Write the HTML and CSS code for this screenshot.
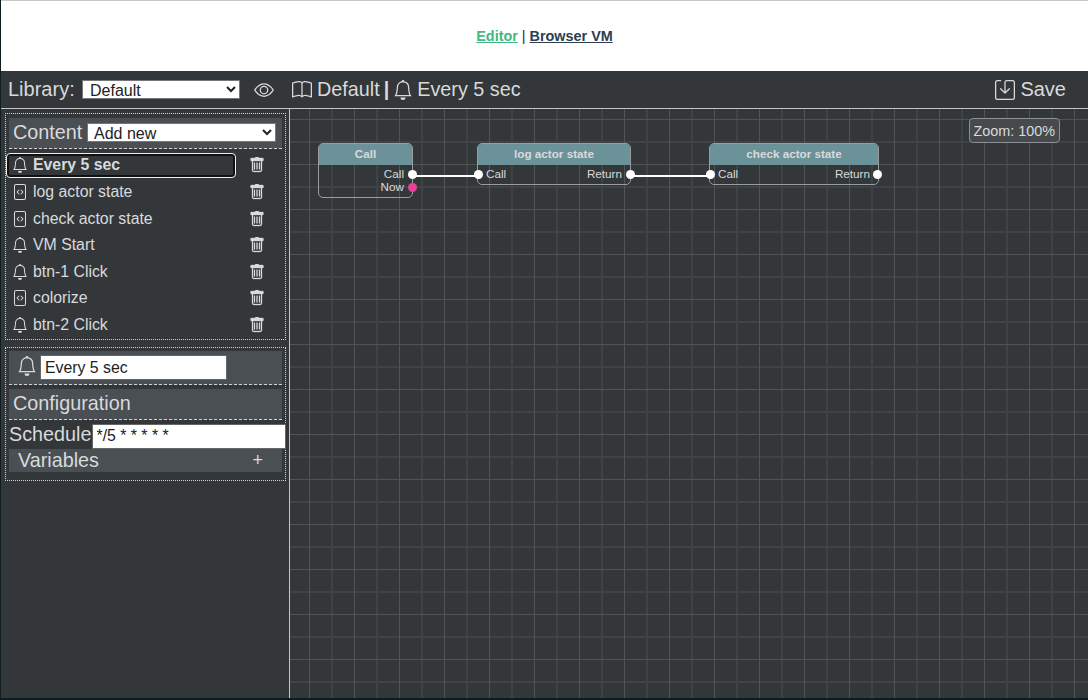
FILE: index.html
```html
<!DOCTYPE html>
<html lang="en">
<head>
<meta charset="utf-8">
<title>Editor</title>
<link rel="stylesheet" href="styles.css">
</head>
<body>
<svg class="defs" width="0" height="0" aria-hidden="true">
  <symbol id="i-bell" viewBox="0 0 16 16"><path d="M8 16a2 2 0 0 0 2-2H6a2 2 0 0 0 2 2zM8 1.918l-.797.161A4.002 4.002 0 0 0 4 6c0 .628-.134 2.197-.459 3.742-.16.767-.376 1.566-.663 2.258h10.244c-.287-.692-.502-1.49-.663-2.258C12.134 8.197 12 6.628 12 6a4.002 4.002 0 0 0-3.203-3.92L8 1.917zM14.22 12c.223.447.481.801.78 1H1c.299-.199.557-.553.78-1C2.68 10.2 3 6.88 3 6c0-2.42 1.72-4.44 4.005-4.901a1 1 0 1 1 1.99 0A5.002 5.002 0 0 1 13 6c0 .88.32 4.2 1.22 6z"/></symbol>
  <symbol id="i-code" viewBox="0 0 16 16"><path d="M6.646 5.646a.5.5 0 1 1 .708.708L5.707 8l1.647 1.646a.5.5 0 0 1-.708.708l-2-2a.5.5 0 0 1 0-.708l2-2zm2.708 0a.5.5 0 1 0-.708.708L10.293 8 8.646 9.646a.5.5 0 0 0 .708.708l2-2a.5.5 0 0 0 0-.708l-2-2z"/><path d="M2 2a2 2 0 0 1 2-2h8a2 2 0 0 1 2 2v12a2 2 0 0 1-2 2H4a2 2 0 0 1-2-2V2zm10-1H4a1 1 0 0 0-1 1v12a1 1 0 0 0 1 1h8a1 1 0 0 0 1-1V2a1 1 0 0 0-1-1z"/></symbol>
  <symbol id="i-trash" viewBox="0 0 16 16"><path d="M2.5 1H6a1 1 0 0 1 1-1h2a1 1 0 0 1 1 1h3.5a1 1 0 0 1 1 1v1a1 1 0 0 1-1 1h-11a1 1 0 0 1-1-1V2a1 1 0 0 1 1-1z"/><path d="M5.5 5.5A.5.5 0 0 1 6 6v6a.5.5 0 0 1-1 0V6a.5.5 0 0 1 .5-.5zm2.5 0a.5.5 0 0 1 .5.5v6a.5.5 0 0 1-1 0V6a.5.5 0 0 1 .5-.5zm3 .5a.5.5 0 0 0-1 0v6a.5.5 0 0 0 1 0V6z"/><path d="M3 4v9a2 2 0 0 0 2 2h6a2 2 0 0 0 2-2V4h-1v9a1 1 0 0 1-1 1H5a1 1 0 0 1-1-1V4z"/></symbol>
  <symbol id="i-eye" viewBox="0 0 16 16"><path d="M16 8s-3-5.5-8-5.5S0 8 0 8s3 5.5 8 5.5S16 8 16 8zM1.173 8a13.133 13.133 0 0 1 1.66-2.043C4.12 4.668 5.88 3.5 8 3.5c2.12 0 3.879 1.168 5.168 2.457A13.133 13.133 0 0 1 14.828 8c-.058.087-.122.183-.195.288-.335.48-.83 1.12-1.465 1.755C11.879 11.332 10.119 12.5 8 12.5c-2.12 0-3.879-1.168-5.168-2.457A13.134 13.134 0 0 1 1.172 8z"/><path d="M8 5.5a2.5 2.5 0 1 0 0 5 2.5 2.5 0 0 0 0-5zM4.5 8a3.5 3.5 0 1 1 7 0 3.5 3.5 0 0 1-7 0z"/></symbol>
  <symbol id="i-book" viewBox="0 0 16 16"><path d="M1 2.828c.885-.37 2.154-.769 3.388-.893 1.33-.134 2.458.063 3.112.752v9.746c-.935-.53-2.12-.603-3.213-.493-1.18.12-2.37.461-3.287.811V2.828zm7.5-.141c.654-.689 1.782-.886 3.112-.752 1.234.124 2.503.523 3.388.893v9.923c-.918-.35-2.107-.692-3.287-.81-1.094-.111-2.278-.039-3.213.492V2.687zM8 1.783C7.015.936 5.587.81 4.287.94c-1.514.153-3.042.672-3.994 1.105A.5.5 0 0 0 0 2.5v11a.5.5 0 0 0 .707.455c.882-.4 2.303-.881 3.68-1.02 1.409-.142 2.59.087 3.223.877a.5.5 0 0 0 .78 0c.633-.79 1.814-1.019 3.222-.877 1.378.139 2.8.62 3.681 1.02A.5.5 0 0 0 16 13.5v-11a.5.5 0 0 0-.293-.455c-.952-.433-2.48-.952-3.994-1.105C10.413.809 8.985.936 8 1.783z"/></symbol>
  <symbol id="i-save" viewBox="0 0 16 16"><path d="M2 1a1 1 0 0 0-1 1v12a1 1 0 0 0 1 1h12a1 1 0 0 0 1-1V2a1 1 0 0 0-1-1H9.5a1 1 0 0 0-1 1v7.293l2.646-2.647a.5.5 0 0 1 .708.708l-3.5 3.5a.5.5 0 0 1-.708 0l-3.5-3.5a.5.5 0 1 1 .708-.708L7.5 9.293V2a2 2 0 0 1 2-2H14a2 2 0 0 1 2 2v12a2 2 0 0 1-2 2H2a2 2 0 0 1-2-2V2a2 2 0 0 1 2-2h2.5a.5.5 0 0 1 0 1H2z"/></symbol>
</svg>
<div class="app">
  <header class="top">
    <a class="link-editor" href="#">Editor</a>&nbsp;|&nbsp;<a class="link-vm" href="#">Browser VM</a>
  </header>
  <div class="toolbar">
    <label class="lib-label">Library:</label>
    <select class="lib-select"><option>Default</option></select>
    <svg class="ico eye"><use href="#i-eye"/></svg>
    <div class="crumbs">
      <svg class="ico book"><use href="#i-book"/></svg>
      <span>Default</span>
      <span class="sep">|</span>
      <svg class="ico crumb-bell"><use href="#i-bell"/></svg>
      <span>Every 5 sec</span>
    </div>
    <div class="save">
      <svg class="ico save-ico"><use href="#i-save"/></svg>
      <span>Save</span>
    </div>
  </div>
  <div class="main">
    <aside class="side">
      <section class="panel">
        <div class="band band-content">
          <span class="band-title">Content</span>
          <select class="add-select"><option>Add new</option></select>
        </div>
        <ul class="items">
          <li class="item selected"><span class="item-name"><svg class="ico item-ico"><use href="#i-bell"/></svg>Every 5 sec</span><svg class="ico trash"><use href="#i-trash"/></svg></li>
          <li class="item"><span class="item-name"><svg class="ico item-ico"><use href="#i-code"/></svg>log actor state</span><svg class="ico trash"><use href="#i-trash"/></svg></li>
          <li class="item"><span class="item-name"><svg class="ico item-ico"><use href="#i-code"/></svg>check actor state</span><svg class="ico trash"><use href="#i-trash"/></svg></li>
          <li class="item"><span class="item-name"><svg class="ico item-ico"><use href="#i-bell"/></svg>VM Start</span><svg class="ico trash"><use href="#i-trash"/></svg></li>
          <li class="item"><span class="item-name"><svg class="ico item-ico"><use href="#i-bell"/></svg>btn-1 Click</span><svg class="ico trash"><use href="#i-trash"/></svg></li>
          <li class="item"><span class="item-name"><svg class="ico item-ico"><use href="#i-code"/></svg>colorize</span><svg class="ico trash"><use href="#i-trash"/></svg></li>
          <li class="item"><span class="item-name"><svg class="ico item-ico"><use href="#i-bell"/></svg>btn-2 Click</span><svg class="ico trash"><use href="#i-trash"/></svg></li>
        </ul>
      </section>
      <section class="panel panel-detail">
        <div class="band band-name">
          <svg class="ico name-bell"><use href="#i-bell"/></svg>
          <input class="name-input" value="Every 5 sec">
        </div>
        <div class="band band-config">Configuration</div>
        <div class="schedule">
          <label class="schedule-label">Schedule</label>
          <input class="schedule-input" value="*/5 * * * * *">
        </div>
        <div class="band band-vars"><span>Variables</span><span class="plus">+</span></div>
      </section>
    </aside>
    <div class="canvas">
      <svg class="wires" width="798" height="589">
        <path d="M122.5 67H188.5M340.5 67H420.5"/>
      </svg>
      <div class="node node-call">
        <div class="node-head">Call</div>
        <div class="port-right">Call</div>
        <div class="port-right">Now</div>
        <i class="dot dot-a"></i>
        <i class="dot dot-b"></i>
      </div>
      <div class="node node-log">
        <div class="node-head">log actor state</div>
        <div class="port-row"><span>Call</span><span>Return</span></div>
        <i class="dot dot-in"></i>
        <i class="dot dot-out"></i>
      </div>
      <div class="node node-check">
        <div class="node-head">check actor state</div>
        <div class="port-row"><span>Call</span><span>Return</span></div>
        <i class="dot dot-in"></i>
        <i class="dot dot-out"></i>
      </div>
      <div class="zoom">Zoom: 100%</div>
    </div>
  </div>
</div>
</body>
</html>
```

FILE: styles.css
```css
* { box-sizing: border-box; }
html, body { height: 100%; }
body {
  margin: 0;
  background: #0f1c22;
  font-family: "Liberation Sans", Arial, sans-serif;
  overflow: hidden;
}
.defs { position: absolute; }
.ico { display: block; fill: currentColor; flex: none; }

.app {
  margin-left: 1px;
  height: 698px;
  display: flex;
  flex-direction: column;
  background: #33373a;
  color: #d8dadb;
}

.top {
  height: 71px;
  flex: none;
  background: #fff;
  border-top: 1px solid #c8c8c8;
  display: flex;
  align-items: center;
  justify-content: center;
  font-size: 14.4px;
  color: #2a2f45;
}
.link-editor { color: #42b983; font-weight: 700; }
.link-vm { color: #2c3e50; font-weight: 700; }

.toolbar {
  height: 38px;
  flex: none;
  display: flex;
  align-items: center;
  border-bottom: 1px solid #c4c6c7;
  padding: 0 22px 0 7px;
  font-size: 20px;
}
.lib-label { width: 74px; }
.lib-select {
  width: 158px;
  height: 19px;
  font: 16px "Liberation Sans", Arial, sans-serif;
  padding: 0 0 0 3px;
  background: #fff;
  color: #222;
  border: 1px solid #777;
  border-radius: 0;
}
.eye { width: 20px; height: 20px; margin-left: 14px; }
.crumbs { display: flex; align-items: center; margin-left: 18px; font-size: 19.8px; }
.book { width: 20px; height: 20px; margin-right: 5px; }
.sep { margin: 0 4px; font-weight: 700; }
.crumb-bell { width: 20px; height: 20px; margin-right: 4px; }
.save { margin-left: auto; display: flex; align-items: center; gap: 5px; }
.save-ico { width: 20px; height: 20px; color: #d8dadb; }

.main { flex: 1; display: flex; min-height: 0; }
.side {
  width: 289px;
  flex: none;
  border-right: 1px solid #c4c6c7;
  padding: 4px 3px 0 4px;
}
.panel {
  border: 1px dotted #d0d2d3;
  padding: 4px 3px 0;
  height: 227px;
}
.panel-detail { height: 134px; margin-top: 7px; padding-top: 3px; }
.band {
  background: #4a4f53;
  display: flex;
  align-items: center;
  border-bottom: 1px dashed #d0d2d3;
  font-size: 19.8px;
}
.band-content { height: 31px; padding: 0 0 2px 4px; }
.band-title { width: 75px; }
.add-select {
  width: 189px;
  height: 19px;
  margin-left: -1px;
  font: 16px "Liberation Sans", Arial, sans-serif;
  padding: 0 0 0 2px;
  background: #fff;
  color: #222;
  border: 1px solid #777;
  border-radius: 0;
}
.items { list-style: none; margin: 3.1px 0 0 -2px; padding: 0; font-size: 15.84px; }
.item { height: 26.6px; display: flex; align-items: center; position: relative; }
.item-name { width: 228px; display: flex; align-items: center; padding-left: 5px; height: 23px; }
.item.selected .item-name {
  font-weight: 700;
  border: 2px solid #111;
  border-radius: 3px;
  outline: 1px solid #eee;
  padding: 0 0 1px 3px;
}
.item-ico { width: 16px; height: 16px; margin-right: 5px; }
.trash { width: 16px; height: 16px; margin-left: 14px; color: #d8dadb; stroke: currentColor; stroke-width: .3; }

.band-name { height: 34px; padding-left: 8px; }
.name-bell { width: 20px; height: 20px; margin: 0 3px 3px 0; }
.name-input {
  width: 187px;
  height: 25px;
  font: 15.84px "Liberation Sans", Arial, sans-serif;
  padding: 0 4px;
  background: #fff;
  color: #222;
  border: 1px solid #666;
}
.band-config { height: 31px; margin-top: 4px; padding: 0 0 2px 4px; }
.schedule { display: flex; height: 25px; margin-top: 4px; font-size: 19.8px; align-items: center; padding-bottom: 3px; }
.schedule-label { width: 83px; margin-bottom: 2px; }
.schedule-input {
  width: 194px;
  height: 25px;
  margin-top: 3px;
  font: 15.84px "Liberation Sans", Arial, sans-serif;
  padding: 0 4px 2px;
  background: #fff;
  color: #222;
  border: 1px solid #666;
  flex: none;
}
.band-vars { height: 23px; justify-content: space-between; padding: 0 19px 0 9px; border-bottom: 0; }
.plus { font-size: 18px; }

.canvas {
  flex: 1;
  position: relative;
  overflow: hidden;
  background-color: #33373a;
  background-image:
    linear-gradient(to right, #505457 1px, transparent 1px),
    linear-gradient(to bottom, #505457 1px, transparent 1px),
    linear-gradient(to right, #3f4346 2px, transparent 2px),
    linear-gradient(to bottom, #3f4346 2px, transparent 2px);
  background-size: 45px 45px;
  background-position: 19px 10px, 19px 10px, 41px 32px, 41px 32px;
}
.wires { position: absolute; left: 0; top: 0; fill: none; stroke: #fff; stroke-width: 2; }
.zoom {
  position: absolute;
  right: 28px;
  top: 9px;
  height: 25px;
  padding: 0 4px 0 3px;
  display: flex;
  align-items: center;
  font-size: 14.4px;
  border: 1px solid #8e9193;
  border-radius: 4px;
  background: #464a4d;
  color: #d8dadb;
}

.node {
  position: absolute;
  top: 34px;
  border: 1px solid #9a9d9f;
  border-radius: 5px;
  font-size: 11.7px;
  color: #d8dadb;
}
.node-call { left: 28px; width: 95px; height: 55px; }
.node-log { left: 187px; width: 154px; height: 42px; }
.node-check { left: 419px; width: 170px; height: 42px; }
.node-check .dot-out { right: -4px; }
.node-head {
  height: 21px;
  padding-bottom: 2px;
  background: #6b9299;
  border-radius: 4px 4px 0 0;
  display: flex;
  align-items: center;
  justify-content: center;
  font-weight: 700;
  color: #d8dadb;
}
.port-right { text-align: right; padding-right: 8px; line-height: 13px; margin-top: 2px; }
.port-right + .port-right { margin-top: 0; }
.port-row { display: flex; justify-content: space-between; padding: 2px 8px 0; line-height: 13px; }
.dot { position: absolute; width: 9px; height: 9px; border-radius: 50%; background: #fff; }
.dot-a { right: -5px; top: 26px; }
.dot-b { right: -5px; top: 39px; background: #e8409c; }
.dot-in { left: -4px; top: 26px; }
.dot-out { right: -5px; top: 26px; }
```
